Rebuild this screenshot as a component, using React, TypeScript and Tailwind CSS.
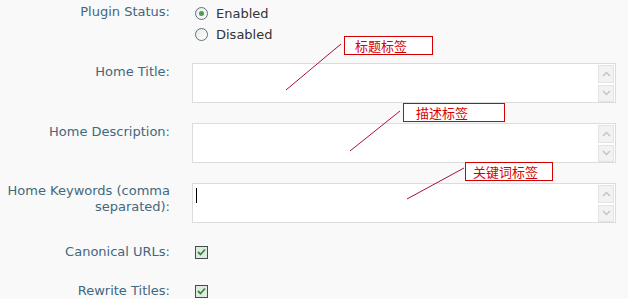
import React from "react";

const labelCls =
  "w-[170px] shrink-0 text-right text-[13px] leading-[16px] text-[#41687e]";

function Radio({ checked, label }: { checked?: boolean; label: string }) {
  return (
    <div className="flex h-[21px] items-center gap-[8px]">
      <span className="flex h-[13px] w-[13px] items-center justify-center rounded-full border border-[#5f7078] bg-gradient-to-br from-[#e6e9ea] to-white">
        {checked && <span className="h-[5px] w-[5px] rounded-full bg-[#4f9a4f]" />}
      </span>
      <span className="text-[13px] text-[#333]">{label}</span>
    </div>
  );
}

function Checkbox() {
  return (
    <span className="flex h-[13px] w-[13px] items-center justify-center border border-[#3d5346] bg-[#e4e8e4]">
      <svg width="9" height="8" viewBox="0 0 9 8">
        <path d="M1 4 L3.5 6.5 L8 1.5" fill="none" stroke="#2f8f2f" strokeWidth="1.8" />
      </svg>
    </span>
  );
}

function ScrollBtn({ up }: { up?: boolean }) {
  return (
    <span className="flex h-[18px] w-[16px] items-center justify-center border border-[#e3e3e3] bg-[#f2f2f2]">
      <svg width="9" height="6" viewBox="0 0 9 6">
        <path
          d={up ? "M1 5 L4.5 1.5 L8 5" : "M1 1 L4.5 4.5 L8 1"}
          fill="none"
          stroke="#c2c2c2"
          strokeWidth="1.3"
        />
      </svg>
    </span>
  );
}

function Area({ caret }: { caret?: boolean }) {
  return (
    <div className="relative flex h-[40px] w-[424px] justify-end border border-[#dcdcdc] bg-white pr-[1px] pt-[1px]">
      {caret && <span className="absolute left-[3px] top-[4px] h-[15px] w-[1px] bg-black" />}
      <div className="flex flex-col gap-[2px]">
        <ScrollBtn up />
        <ScrollBtn />
      </div>
    </div>
  );
}

function Note({ text, cls }: { text: string; cls: string }) {
  return (
    <div
      className={`absolute flex items-center border border-[#d40000] bg-white text-[13px] leading-none text-[#d80000] ${cls}`}
      style={{ fontFamily: '"Noto Sans CJK SC", sans-serif' }}
    >
      {text}
    </div>
  );
}

export default function App() {
  return (
    <div
      className="relative h-[299px] w-[628px] overflow-hidden bg-[#f9f9f9]"
      style={{ fontFamily: '"DejaVu Sans", Verdana, sans-serif' }}
    >
      <div className="flex flex-col">
        <div className="mt-[3px] flex gap-[25px]">
          <div className={`${labelCls} pt-[1px]`}>Plugin Status:</div>
          <div className="flex flex-col">
            <Radio checked label="Enabled" />
            <Radio label="Disabled" />
          </div>
        </div>

        <div className="mt-[18px] flex gap-[22px]">
          <div className={`${labelCls} pt-[1px]`}>Home Title:</div>
          <Area />
        </div>

        <div className="mt-[20px] flex gap-[22px]">
          <div className={`${labelCls} pt-[1px]`}>Home Description:</div>
          <Area />
        </div>

        <div className="mt-[20px] flex gap-[22px]">
          <div className={labelCls}>
            Home Keywords (comma
            <br />
            separated):
          </div>
          <Area caret />
        </div>

        <div className="mt-[21px] flex h-[16px] items-center gap-[25px]">
          <div className={labelCls}>Canonical URLs:</div>
          <Checkbox />
        </div>

        <div className="mt-[23px] flex h-[16px] items-center gap-[25px]">
          <div className={labelCls}>Rewrite Titles:</div>
          <Checkbox />
        </div>
      </div>

      <svg className="pointer-events-none absolute left-0 top-0" width="628" height="299">
        <line x1="286" y1="90" x2="341" y2="44" stroke="#a8103c" strokeWidth="1" />
        <line x1="350" y1="151" x2="400" y2="111" stroke="#a8103c" strokeWidth="1" />
        <line x1="407" y1="199" x2="464" y2="168" stroke="#a8103c" strokeWidth="1" />
      </svg>

      <Note text="标题标签" cls="left-[344px] top-[36px] h-[19px] w-[89px] pl-[10px]" />
      <Note text="描述标签" cls="left-[403px] top-[103px] h-[19px] w-[102px] pl-[12px]" />
      <Note text="关键词标签" cls="left-[465px] top-[162px] h-[19px] w-[88px] pl-[7px]" />
    </div>
  );
}
